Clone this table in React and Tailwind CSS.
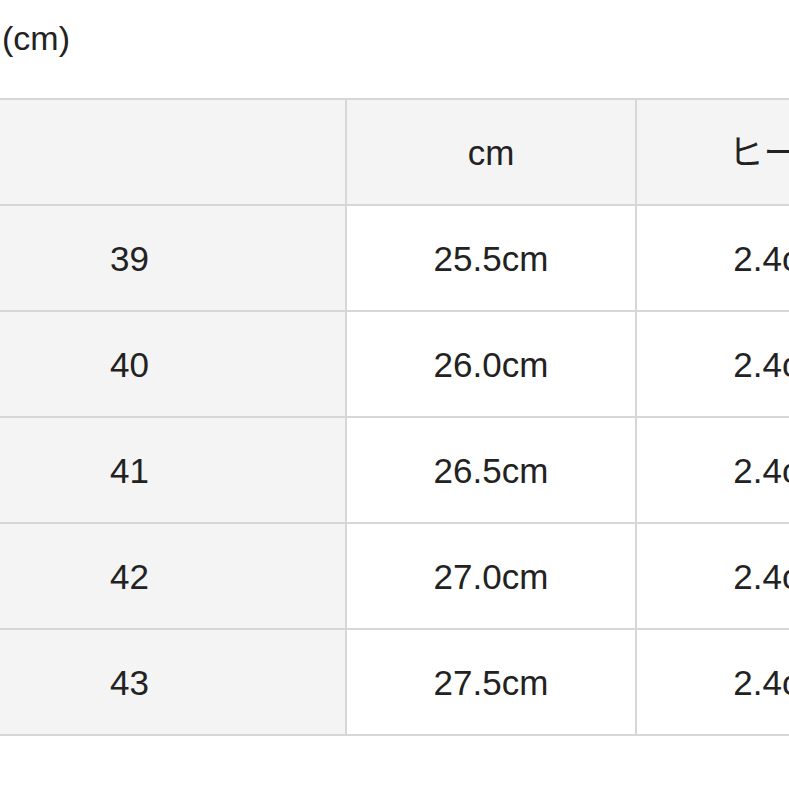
import React from "react";

const rows = [
  ["39", "25.5cm", "2.4cm"],
  ["40", "26.0cm", "2.4cm"],
  ["41", "26.5cm", "2.4cm"],
  ["42", "27.0cm", "2.4cm"],
  ["43", "27.5cm", "2.4cm"],
];

const App = () => {
  return (
    <div className="w-[789px] h-[789px] overflow-hidden bg-white text-[#222] font-['Liberation_Sans','Noto_Sans_CJK_JP',sans-serif]">
      <div className="h-[98px] pt-[18px] pl-[2px] text-[34px] leading-[40px]">(cm)</div>
      <div className="ml-[-88px] w-[1013px] grid grid-cols-[431px_288px_288px] gap-[2px] p-[2px] bg-[#d7d7d7] text-[35px]">
        <div className="h-[104px] bg-[#f4f4f4]"></div>
        <div className="h-[104px] pt-[2px] bg-[#f4f4f4] flex items-center justify-center">cm</div>
        <div className="h-[104px] pt-[2px] bg-[#f4f4f4] flex items-center justify-center">ヒール</div>
        {rows.map((r) => (
          <React.Fragment key={r[0]}>
            <div className="h-[104px] pt-[2px] bg-[#f4f4f4] flex items-center justify-center">{r[0]}</div>
            <div className="h-[104px] pt-[2px] bg-white flex items-center justify-center">{r[1]}</div>
            <div className="h-[104px] pt-[2px] bg-white flex items-center justify-center">{r[2]}</div>
          </React.Fragment>
        ))}
      </div>
    </div>
  );
};

export default App;
